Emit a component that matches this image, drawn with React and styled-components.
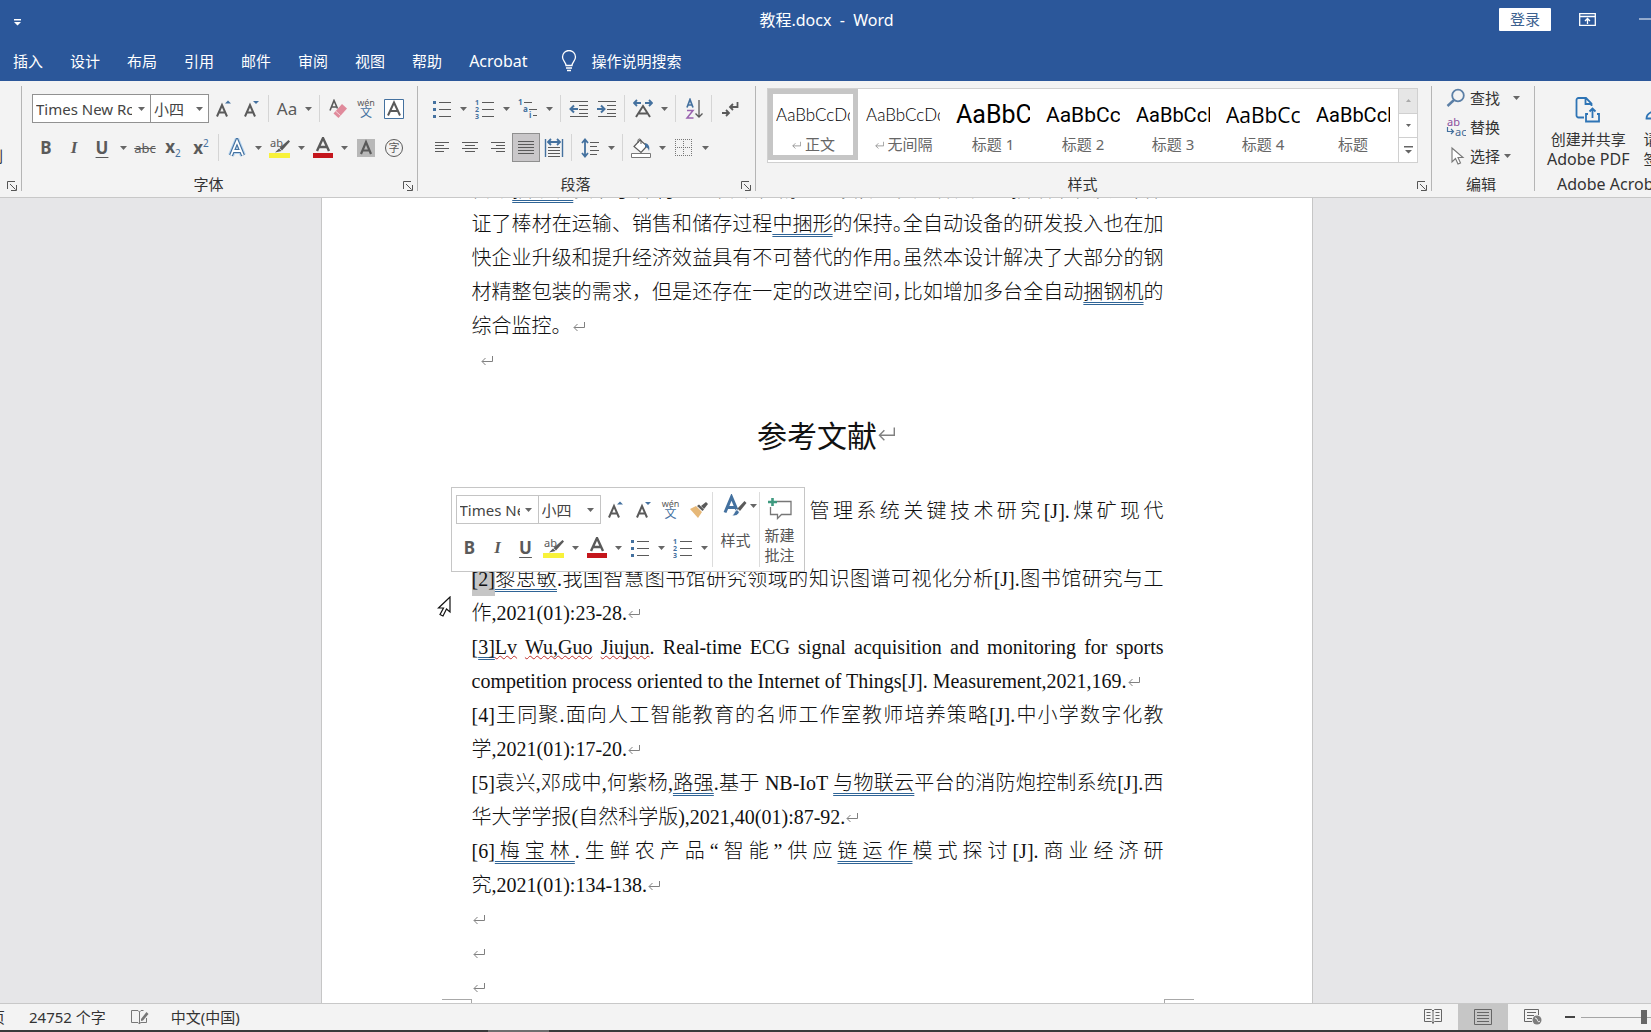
import React from "react";
import styled, { createGlobalStyle, css } from "styled-components";

const BLUE = "#2b579a";
const INK = "#5a5a5a";
const ACCENT = "#44719f";

/* ---------- icons ---------- */

const Caret = ({ color = "#666" }) => (
  <svg width="7" height="4" viewBox="0 0 7 4" aria-hidden="true">
    <path d="M0 0h7L3.5 4z" fill={color} />
  </svg>
);

const Launcher = () => (
  <svg width="10" height="10" viewBox="0 0 10 10" fill="none" stroke="#555" aria-hidden="true">
    <path d="M.5 8V.5H8M3 3l5.5 5.5M9.5 4v5.5H4" />
  </svg>
);

const Mark = styled.svg`
  margin-left: 1px;
`;

const ReturnMark = ({ size = 12 }) => (
  <Mark width={size} height={size} viewBox="0 0 12 12" fill="none" stroke="#808080" aria-hidden="true">
    <path d="M11.5 1v5.5H1.2M4.5 3 1 6.5 4.5 10" />
  </Mark>
);

const GrowIcon = ({ down }) => (
  <svg width="16" height="20" viewBox="0 0 16 20" aria-hidden="true">
    <path d="M2 17.500 7 6l5 11.500M4 13.500h6" fill="none" stroke={INK} strokeWidth="2" />
    <path d={down ? "M10 2h6l-3 3z" : "M10 4.500h6L13 1.500z"} fill={ACCENT} />
  </svg>
);

const EraserIcon = () => (
  <svg width="20" height="20" viewBox="0 0 20 20" aria-hidden="true">
    <path d="M2 11.500 6 1.500l3.500 8M3.500 8h5" fill="none" stroke={INK} strokeWidth="1.600" />
    <path d="M5.500 14.500 14 5l5 4.500-8.500 9.500z" fill="#e08a9b" />
    <path d="m7.500 12 5 4.500" stroke="#f6d5db" />
  </svg>
);

const Pinyin = () => (
  <PinyinBox>
    <span>wén</span>
    <b>文</b>
  </PinyinBox>
);

const OutlineA = () => (
  <svg width="20" height="20" viewBox="0 0 20 20" fill="none" aria-hidden="true">
    <path d="M4 17.500 10 3l6 14.500M6 13h8" stroke="#b5d3ee" strokeWidth="6" />
    <path d="M4 17.500 10 3l6 14.500M6 13h8" stroke={ACCENT} strokeWidth="4" />
    <path d="M4 17.500 10 3l6 14.500M6 13h8" stroke="#fff" strokeWidth="1.800" />
  </svg>
);

const HighlightIcon = () => (
  <svg width="22" height="22" viewBox="0 0 22 22" aria-hidden="true">
    <text x="1" y="10" fontFamily="Noto Sans" fontSize="11" fill={INK}>ab</text>
    <path d="m19.500 3 1.500 1.500-8 9-2.500-2.500z" fill={INK} />
    <path d="M10 11.500 12.500 14 6 15.500z" fill={INK} />
    <path d="M0 16h21v5H0z" fill="#f8f23a" />
  </svg>
);

const FontColorIcon = () => (
  <svg width="22" height="22" viewBox="0 0 22 22" aria-hidden="true">
    <path d="M5 14 11 1l6 13M7 10h8" fill="none" stroke={INK} strokeWidth="2.400" />
    <path d="M1 16h20v5H1z" fill="#c4161c" />
  </svg>
);

const ShadedA = () => (
  <svg width="18" height="18" viewBox="0 0 18 18" aria-hidden="true">
    <path d="M0 0h18v18H0z" fill="#b8b8b8" />
    <path d="M4 15 9 3l5 12M5.500 11.500h7" fill="none" stroke={INK} strokeWidth="2.200" />
  </svg>
);

const BoxedA = () => (
  <svg width="20" height="20" viewBox="0 0 20 20" fill="none" aria-hidden="true">
    <path d="M.5.5h19v19H.5z" stroke={ACCENT} fill="#fff" />
    <path d="m4 16.500 6-13 6 13M6 12h8" stroke={INK} strokeWidth="2" />
  </svg>
);

const CircledChar = () => (
  <svg width="20" height="20" viewBox="0 0 20 20" aria-hidden="true">
    <circle cx="10" cy="10" r="8.500" fill="none" stroke={INK} />
    <text x="10" y="14" textAnchor="middle" fontFamily="Noto Sans CJK SC" fontSize="11" fill={INK}>字</text>
  </svg>
);

const BulletsIcon = () => (
  <svg width="20" height="18" viewBox="0 0 20 18" aria-hidden="true">
    <path d="M7 2.500h12M7 9.500h12M7 16.500h12" stroke={INK} />
    <path d="M1 1h3v3H1zM1 8h3v3H1zM1 15h3v3H1z" fill={ACCENT} />
  </svg>
);

const NumberingIcon = () => (
  <svg width="20" height="20" viewBox="0 0 20 20" aria-hidden="true">
    <path d="M7 3.500h12M7 10.500h12M7 17.500h12" stroke={INK} />
    <g fontFamily="Noto Sans" fontSize="7" fontWeight="700" fill={ACCENT}>
      <text x="0" y="6">1</text>
      <text x="0" y="13">2</text>
      <text x="0" y="20">3</text>
    </g>
  </svg>
);

const MultiLevelIcon = () => (
  <svg width="20" height="20" viewBox="0 0 20 20" aria-hidden="true">
    <path d="M6 3.500h8M11 10.500h8M15 16.500h4" stroke={INK} />
    <g fontFamily="Noto Sans" fontSize="8" fontWeight="700" fill={ACCENT}>
      <text x="0" y="6">1</text>
      <text x="5" y="13">a</text>
      <text x="11" y="19">i</text>
    </g>
  </svg>
);

const IndentIcon = ({ more }) => (
  <svg width="20" height="18" viewBox="0 0 20 18" fill="none" aria-hidden="true">
    <path d="M1 1.500h18M10 5.500h9M10 9.500h9M10 13.500h9M1 16.500h18" stroke={INK} />
    <path d={more ? "M0 9h7M4 5.500 7.500 9 4 12.500" : "M9 9H2M5 5.500 1.500 9 5 12.500"} stroke={ACCENT} strokeWidth="2" />
  </svg>
);

const CharScaleIcon = () => (
  <svg width="20" height="20" viewBox="0 0 20 20" fill="none" aria-hidden="true">
    <path d="M3 18 10 7l7 11M6 14.500h8" stroke={INK} strokeWidth="2" />
    <path d="M1 4h7M4 1 1 4l3 3M12 4h7M16 1l3 3-3 3" stroke={ACCENT} strokeWidth="1.800" />
  </svg>
);

const SortIcon = () => (
  <svg width="18" height="22" viewBox="0 0 18 22" fill="none" aria-hidden="true">
    <path d="m2 9.500 3-8 3 8M3 7h4" stroke={ACCENT} strokeWidth="1.700" />
    <path d="M2 12.500h6L2 20h6.500" stroke="#9a63b0" strokeWidth="1.500" />
    <path d="M14 2v17M10.500 15.500 14 19l3.500-3.500" stroke={INK} strokeWidth="1.300" />
  </svg>
);

const ParaMarkIcon = () => (
  <svg width="18" height="18" viewBox="0 0 18 18" fill="none" stroke={INK} strokeWidth="1.800" aria-hidden="true">
    <path d="M16.500 2v5H9.500M12 4 9 7l3 3M1 13h7M5 10l3 3-3 3" />
  </svg>
);

const ALIGN = {
  left: "M2 2.500h14M2 5.500h9M2 8.500h14M2 11.500h9",
  center: "M1 2.500h16M4 5.500h10M1 8.500h16M4 11.500h10",
  right: "M2 2.500h14M7 5.500h9M2 8.500h14M7 11.500h9",
  justify: "M1 1.500h16M1 4.500h16M1 7.500h16M1 10.500h16M1 13.500h16",
};

const AlignIcon = ({ kind }) => (
  <svg width="18" height="15" viewBox="0 0 18 15" stroke={INK} aria-hidden="true">
    <path d={ALIGN[kind]} />
  </svg>
);

const DistributeIcon = () => (
  <svg width="20" height="20" viewBox="0 0 20 20" fill="none" aria-hidden="true">
    <path d="M1.500 1v18M18.500 1v18" stroke={ACCENT} strokeWidth="1.400" />
    <path d="M4 4h12M7 1 4 4l3 3M13 1l3 3-3 3" stroke={ACCENT} strokeWidth="1.800" />
    <path d="M4 9.500h12M4 12.500h12M4 15.500h12M4 18.500h12" stroke={INK} />
  </svg>
);

const LineSpacingIcon = () => (
  <svg width="18" height="20" viewBox="0 0 18 20" fill="none" aria-hidden="true">
    <path d="M4 2v16M1 5l3-3.500L7 5M1 15l3 3.500L7 15" stroke={ACCENT} strokeWidth="1.800" />
    <path d="M9 4.500h9M9 8.500h7M9 12.500h9M9 16.500h7" stroke={INK} />
  </svg>
);

const BucketIcon = () => (
  <svg width="20" height="20" viewBox="0 0 20 20" fill="none" aria-hidden="true">
    <path d="m9 2 7 6-6 6.500-7-6z" fill="#fff" stroke={INK} strokeWidth="1.200" />
    <path d="M7 5V2.500C7 .5 10 .5 10 2.500V6" stroke={INK} />
    <path d="M14 5c4 1 5 4 4 8-1-3-2-4-4-4z" fill={ACCENT} />
    <path d="M.5 15.500h19v4H.5z" fill="#fff" stroke="#777" />
  </svg>
);

const BordersIcon = () => (
  <svg width="18" height="18" viewBox="0 0 18 18" fill="none" stroke="#777" strokeDasharray="1 1" shapeRendering="crispEdges" aria-hidden="true">
    <path d="M0 .5h17M0 8.500h17M0 16.500h17M.5 0v17M8.500 0v17M16.500 0v17" />
  </svg>
);

const PainterIcon = () => (
  <svg width="18" height="16" viewBox="0 0 18 16" aria-hidden="true">
    <path d="M0 7 6 4l6 6-4 6z" fill="#e6b878" />
    <path d="m7 4 2-1.500 5 5L12.500 9z" fill={INK} />
    <path d="m11 4 5-4 2 2-4 5z" fill={INK} />
  </svg>
);

const StylesIcon = () => (
  <svg width="24" height="24" viewBox="0 0 24 24" aria-hidden="true">
    <path d="M2 18.500 8.500 3 14 16M4.500 13.500h8" fill="none" stroke={ACCENT} strokeWidth="3" />
    <path d="m21.500 7 2 2-6.500 8-2.500-2.500z" fill={INK} />
    <path d="M14 15.500 16.500 18c-1.500 4-5 4.500-8 3.500 3-.5 2.500-5 5.500-6z" fill={ACCENT} stroke="#fff" />
  </svg>
);

const CommentIcon = () => (
  <svg width="24" height="22" viewBox="0 0 24 22" fill="none" aria-hidden="true">
    <path d="M9 3.500h14v13H13.500l-4 4v-4H2.500V9" stroke="#777" strokeWidth="1.300" />
    <path d="M4.500 0v8M0 4h9" stroke="#3f9a80" strokeWidth="2.600" />
  </svg>
);

const BulbIcon = () => (
  <svg width="16" height="22" viewBox="0 0 16 22" fill="none" stroke="#fff" strokeWidth="1.300" aria-hidden="true">
    <path d="M5 15.500C5 12 1.500 11 1.500 7a6.500 6.500 0 0 1 13 0c0 4-3.500 5-3.500 8.500zM5 18h6M6 20.500h4" />
  </svg>
);

const RibbonOptionsIcon = () => (
  <svg width="17" height="13" viewBox="0 0 17 13" fill="none" stroke="#fff" strokeWidth="1.300" aria-hidden="true">
    <path d="M.7.7h15.600v11.600H.7zM.7 3.500h15.600M8.500 11V5.500M6 8l2.500-2.500L11 8" />
  </svg>
);

const SearchIcon = () => (
  <svg width="20" height="20" viewBox="0 0 20 20" fill="none" stroke="#5b7fa6" aria-hidden="true">
    <circle cx="12" cy="7.500" r="5.800" strokeWidth="1.800" />
    <path d="m8 12-6.500 6" strokeWidth="2.400" />
  </svg>
);

const ReplaceIcon = () => (
  <svg width="20" height="20" viewBox="0 0 20 20" aria-hidden="true">
    <g fontFamily="Noto Sans" fontSize="11">
      <text x="1" y="9" fill="#8a4f9e">ab</text>
      <text x="9" y="19" fill="#456a94">ac</text>
    </g>
    <path d="M1.500 10v4.500H7M5 12l2.500 2.500L5 17" fill="none" stroke={ACCENT} strokeWidth="1.200" />
  </svg>
);

const PointerIcon = () => (
  <svg width="20" height="20" viewBox="0 0 20 20" aria-hidden="true">
    <path d="M6 2v14l3.500-3.500L12 18l2.500-1-2.500-5.500h5z" fill="#fff" stroke="#777" strokeWidth="1.100" />
  </svg>
);

const PdfIcon = () => (
  <svg width="26" height="26" viewBox="0 0 26 26" fill="none" stroke="#2e74b5" strokeWidth="1.800" aria-hidden="true">
    <path d="M9 20.500H3.500a2 2 0 0 1-2-2V3a2 2 0 0 1 2-2H11l5.500 5.500V9M10.500 1.500V7h5.500" />
    <path d="M13 17h-2v7.500h13V17h-2M17.500 21v-9M14.500 14.500l3-3 3 3" />
  </svg>
);

const PersonIcon = () => (
  <svg width="26" height="26" viewBox="0 0 26 26" fill="none" stroke="#2e74b5" strokeWidth="1.800" aria-hidden="true">
    <circle cx="13" cy="7.500" r="6" />
    <path d="M9.500 12.500c0 3-8 2-8 9H13M15 22l2-5 6-6 2 2-6 6z" />
  </svg>
);

const ProofIcon = () => (
  <svg width="18" height="15" viewBox="0 0 18 15" fill="none" stroke="#777" aria-hidden="true">
    <path d="M8.500 2v12M8.500 2 7 .5H.5v12H7L8.500 14l1-1.500h6V8M8.500 2 10 .5h2.500" />
    <path d="m15.500 2-5.500 7v2l2-.5L17.500 4z" fill="#777" stroke="none" />
  </svg>
);

const ReadIcon = () => (
  <svg width="18" height="16" viewBox="0 0 18 16" fill="none" stroke="#666" aria-hidden="true">
    <path d="M9 2v13M9 2 7.500.5H.5v12h7L9 14l1.500-1.500h7V.5h-7z" />
    <path d="M2.500 3.500h4M2.500 6.500h4M2.500 9.500h4M11.500 3.500h4M11.500 6.500h4M11.500 9.500h4" />
  </svg>
);

const PrintIcon = () => (
  <svg width="18" height="16" viewBox="0 0 18 16" fill="none" stroke="#666" aria-hidden="true">
    <path d="M.5.5h17v15H.5zM3 3.500h12M3 6.500h12M3 9.500h12M3 12.500h12" />
  </svg>
);

const WebIcon = () => (
  <svg width="18" height="16" viewBox="0 0 18 16" fill="none" stroke="#666" aria-hidden="true">
    <path d="M8 12.500H.5v-12h14V6M3 3.500h9M3 6.500h7M3 9.500h5" />
    <circle cx="13" cy="11" r="4.500" fill="#7d7d7d" stroke="none" />
    <path d="M11 9c1.500 0 2 1 2.500 2.500S15 13 16 12" stroke="#fff" />
  </svg>
);

/* ---------- document text ---------- */

const Half = styled.span`
  font-family: "Noto Sans CJK SC", sans-serif;
  font-feature-settings: "halt";
  line-height: 1;
`;
const Proof = styled.span`
  text-decoration: underline double 1px #2f6496;
  text-decoration-skip-ink: none;
  text-underline-offset: 3px;
`;
const Spelling = styled.span`
  text-decoration: underline wavy 1px #c0302b;
  text-decoration-skip-ink: none;
`;
const Selected = styled.span`
  display: inline-block;
  height: 34px;
  line-height: 34px;
  background: #c6c6c6;
`;

const PARAGRAPH = [
  <>自动<Proof>捆钢机</Proof>实现了棒材的全自动化精整包装<Half>，</Half>能够有效提高打捆效率和质量<Half>，</Half>保</>,
  <>证了棒材在运输、销售和储存过程<Proof>中捆形</Proof>的保持<Half>。</Half>全自动设备的研发投入也在加</>,
  <>快企业升级和提升经济效益具有不可替代的作用<Half>。</Half>虽然本设计解决了大部分的钢</>,
  <>材精整包装的需求，但是还存在一定的改进空间<Half>，</Half>比如增加多台全自动<Proof>捆钢机</Proof>的</>,
];

const REFERENCES = [
  {
    first: <><Selected>[2]</Selected><Proof>黎思敏</Proof>.我国智慧图书馆研究领域的知识图谱可视化分析[J].图书馆研究与工</>,
    last: "作,2021(01):23-28.",
  },
  {
    first: <>[<Proof>3]</Proof><Spelling>Lv</Spelling> <Spelling>Wu,Guo</Spelling> <Spelling>Jiujun</Spelling>. Real-time ECG signal acquisition and monitoring for sports</>,
    last: "competition process oriented to the Internet of Things[J]. Measurement,2021,169.",
  },
  {
    first: <>[4]王同聚.面向人工智能教育的名师工作室教师培养策略[J].中小学数字化教</>,
    last: "学,2021(01):17-20.",
  },
  {
    first: <>[5]袁兴,邓成中,何紫杨,<Proof>路强</Proof>.基于 NB-IoT <Proof>与物联云</Proof>平台的消防炮控制系统[J].西</>,
    last: "华大学学报(自然科学版),2021,40(01):87-92.",
  },
  {
    first: <>[6]<Proof>梅宝林</Proof>.生鲜农产品“智能”供应<Proof>链运作</Proof>模式探讨[J].商业经济研</>,
    last: "究,2021(01):134-138.",
  },
];

const TABS = ["插入", "设计", "布局", "引用", "邮件", "审阅", "视图", "帮助", "Acrobat"];

const STYLES = [
  { name: "正文", sample: "AaBbCcDd", size: 17, font: "Lato", mark: true, active: true },
  { name: "无间隔", sample: "AaBbCcDd", size: 17, font: "Lato", mark: true },
  { name: "标题 1", sample: "AaBbC", size: 25, font: "Roboto" },
  { name: "标题 2", sample: "AaBbCc", size: 21, font: "Roboto" },
  { name: "标题 3", sample: "AaBbCcD", size: 20, font: "Roboto" },
  { name: "标题 4", sample: "AaBbCcD", size: 21, font: "Open Sans" },
  { name: "标题", sample: "AaBbCcD", size: 20, font: "Roboto" },
];

const Split = ({ label, children }) => (
  <>
    <Tool aria-label={label}>{children}</Tool>
    <DropArrow aria-label={`${label} ▾`}><Caret /></DropArrow>
  </>
);

const FontCombos = ({ mini }) => (
  <ComboRow>
    <Combo $width={mini ? 83 : 119} $mini={mini}>
      <input aria-label="字体" defaultValue="Times New Roman" />
      <button aria-label="字体 ▾"><Caret /></button>
    </Combo>
    <Combo $width={mini ? 63 : 59} $mini={mini}>
      <input aria-label="字号" defaultValue="小四" />
      <button aria-label="字号 ▾"><Caret /></button>
    </Combo>
  </ComboRow>
);

const RibbonGroup = ({ title, launcher, width, children }) => (
  <Group $width={width}>
    <GroupBody>{children}</GroupBody>
    <GroupFooter>
      <GroupTitle $shift={launcher}>{title}</GroupTitle>
      {launcher && <LaunchButton aria-label={`${title} …`}><Launcher /></LaunchButton>}
    </GroupFooter>
  </Group>
);

const MiniToolbar = () => (
  <Mini>
    <MiniMain>
      <Row>
        <FontCombos mini />
        <MiniGap />
        <Tool aria-label="A+"><GrowIcon /></Tool>
        <Tool aria-label="A-"><GrowIcon down /></Tool>
        <Tool aria-label="wén"><Pinyin /></Tool>
        <Tool aria-label="格式刷"><PainterIcon /></Tool>
      </Row>
      <Row>
        <Tool><Letter $bold>B</Letter></Tool>
        <Tool><Letter $bold $italic>I</Letter></Tool>
        <Tool><Letter $bold $underline>U</Letter></Tool>
        <Split label="ab"><HighlightIcon /></Split>
        <Split label="A"><FontColorIcon /></Split>
        <Split label="•"><BulletsIcon /></Split>
        <Split label="1."><NumberingIcon /></Split>
      </Row>
    </MiniMain>
    <MiniStyles>
      <MiniIconRow><StylesIcon /><Caret /></MiniIconRow>
      <span>样式</span>
    </MiniStyles>
    <MiniComment>
      <CommentIcon />
      <span>新建<br />批注</span>
    </MiniComment>
  </Mini>
);

const App = () => {
  return (
    <>
      <GlobalStyle />
      <Window>
        <TitleBar>
          <QuickAccess aria-label="快速访问">
            <svg width="7" height="7" viewBox="0 0 7 7"><path d="M0 0h7v1.500H0zM0 3h7L3.500 6.500z" fill="#fff" /></svg>
          </QuickAccess>
          <FileName>教程.docx&nbsp; -&nbsp; Word</FileName>
          <WindowButtons>
            <LoginButton>登录</LoginButton>
            <PlainButton aria-label="▴"><RibbonOptionsIcon /></PlainButton>
            <PlainButton aria-label="—">
              <svg width="16" height="2"><path d="M0 1h16" stroke="#fff" /></svg>
            </PlainButton>
          </WindowButtons>
        </TitleBar>
        <TabBar>
          {TABS.map((tab) => (
            <Tab key={tab}>{tab}</Tab>
          ))}
          <TellMe><BulbIcon />操作说明搜索</TellMe>
        </TabBar>

        <Ribbon>
          <Group $width={22}>
            <GroupBody><CutLabel>刷</CutLabel></GroupBody>
            <GroupFooter><LaunchButton aria-label="…"><Launcher /></LaunchButton></GroupFooter>
          </Group>

          <RibbonGroup title="字体" launcher width={396}>
            <ToolRows>
              <Row>
                <FontCombos />
                <Tool aria-label="A+"><GrowIcon /></Tool>
                <Tool aria-label="A-"><GrowIcon down /></Tool>
                <Sep />
                <Split label="Aa"><Letter>Aa</Letter></Split>
                <Sep />
                <Tool aria-label="A"><EraserIcon /></Tool>
                <Tool aria-label="wén"><Pinyin /></Tool>
                <Tool aria-label="A"><BoxedA /></Tool>
              </Row>
              <Row>
                <Tool><Letter $bold>B</Letter></Tool>
                <Tool><Letter $bold $italic>I</Letter></Tool>
                <Split label="U"><Letter $bold $underline>U</Letter></Split>
                <Tool><Letter $strike>abc</Letter></Tool>
                <Tool><Letter $bold>x<sub>2</sub></Letter></Tool>
                <Tool><Letter $bold>x<sup>2</sup></Letter></Tool>
                <Sep />
                <Split label="A"><OutlineA /></Split>
                <Split label="ab"><HighlightIcon /></Split>
                <Split label="A"><FontColorIcon /></Split>
                <Tool aria-label="A"><ShadedA /></Tool>
                <Tool aria-label="字"><CircledChar /></Tool>
              </Row>
            </ToolRows>
          </RibbonGroup>

          <RibbonGroup title="段落" launcher width={338}>
            <ToolRows>
              <Row>
                <Split label="•"><BulletsIcon /></Split>
                <Split label="1."><NumberingIcon /></Split>
                <Split label="a."><MultiLevelIcon /></Split>
                <Sep />
                <Tool aria-label="←"><IndentIcon /></Tool>
                <Tool aria-label="→"><IndentIcon more /></Tool>
                <Sep />
                <Split label="A"><CharScaleIcon /></Split>
                <Sep />
                <Tool aria-label="AZ"><SortIcon /></Tool>
                <Sep />
                <Tool aria-label="↵"><ParaMarkIcon /></Tool>
              </Row>
              <Row>
                <Tool aria-label="左"><AlignIcon kind="left" /></Tool>
                <Tool aria-label="中"><AlignIcon kind="center" /></Tool>
                <Tool aria-label="右"><AlignIcon kind="right" /></Tool>
                <Tool aria-label="两端" $pressed><AlignIcon kind="justify" /></Tool>
                <Tool aria-label="分散"><DistributeIcon /></Tool>
                <Sep />
                <Split label="行距"><LineSpacingIcon /></Split>
                <Sep />
                <Split label="底纹"><BucketIcon /></Split>
                <Split label="边框"><BordersIcon /></Split>
              </Row>
            </ToolRows>
          </RibbonGroup>

          <RibbonGroup title="样式" launcher width={676}>
            <Gallery>
              {STYLES.map((s) => (
                <StyleCard key={s.name} $active={s.active}>
                  <Sample $size={s.size} $font={s.font}>{s.sample}</Sample>
                  <StyleName>{s.mark && <ReturnMark size={9} />} {s.name}</StyleName>
                </StyleCard>
              ))}
              <GalleryScroll>
                <button aria-label="▴" disabled>
                  <svg width="5" height="3"><path d="M0 3h5L2.500 0z" fill="#aaa" /></svg>
                </button>
                <button aria-label="▾">
                  <svg width="5" height="3"><path d="M0 0h5L2.500 3z" fill="#666" /></svg>
                </button>
                <button aria-label="▾▾">
                  <svg width="9" height="8"><path d="M0 0h9v1.500H0zM1 4h7L4.500 7.500z" fill="#666" /></svg>
                </button>
              </GalleryScroll>
            </Gallery>
          </RibbonGroup>

          <RibbonGroup title="编辑" width={103}>
            <EditList>
              <EditButton><SearchIcon />查找<Spacer /><Caret /></EditButton>
              <EditButton><ReplaceIcon />替换</EditButton>
              <EditButton><PointerIcon />选择<Caret /></EditButton>
            </EditList>
          </RibbonGroup>

          <AcrobatGroup>
            <AcrobatTools>
              <BigButton><PdfIcon /><span>创建并共享</span><Latin>Adobe PDF</Latin></BigButton>
              <BigButton><PersonIcon /><span>请求</span><span>签名</span></BigButton>
            </AcrobatTools>
            <AcrobatTitle>Adobe Acrobat</AcrobatTitle>
          </AcrobatGroup>
        </Ribbon>

        <Workspace>
          <Page>
            {PARAGRAPH.map((line, i) => (
              <Line key={i} $justify>{line}</Line>
            ))}
            <Line>综合监控。<ReturnMark /></Line>
            <Line $indent={8}><ReturnMark /></Line>
            <Heading>参考文献<ReturnMark size={17} /></Heading>
            <Line $justify $indent={338}>管理系统关键技术研究[J].煤矿现代</Line>
            <Line />
            {REFERENCES.map((ref) => (
              <React.Fragment key={ref.last}>
                <Line $justify>{ref.first}</Line>
                <Line>{ref.last}<ReturnMark /></Line>
              </React.Fragment>
            ))}
            <Line><ReturnMark /></Line>
            <Line><ReturnMark /></Line>
            <Line><ReturnMark /></Line>
            <Corners><i /><i /></Corners>
            <MiniToolbar />
            <MouseArrow width="14" height="22" viewBox="0 0 14 22" aria-hidden="true">
              <path d="M13 1v15l-3.500-3L6 20l-3-1.500L6.500 12H1.500z" fill="#fff" stroke="#111" strokeWidth="1.200" />
            </MouseArrow>
          </Page>
        </Workspace>

        <StatusBar>
          <CutLabel $status>页</CutLabel>
          <WordCount>24752 个字</WordCount>
          <ProofIcon />
          <Language>中文(中国)</Language>
          <Spacer />
          <ViewButton aria-label="阅读"><ReadIcon /></ViewButton>
          <ViewButton aria-label="页面" $active><PrintIcon /></ViewButton>
          <ViewButton aria-label="Web"><WebIcon /></ViewButton>
          <ZoomOut aria-label="−"><svg width="10" height="2"><path d="M0 1h10" stroke="#444" strokeWidth="2" /></svg></ZoomOut>
          <ZoomBox><input type="range" aria-label="%" defaultValue="50" /></ZoomBox>
        </StatusBar>
        <TaskEdge><i /></TaskEdge>
      </Window>
    </>
  );
};

const GlobalStyle = createGlobalStyle`
  * { box-sizing: border-box; }
  body {
    margin: 0;
    font-family: "Noto Sans", "Noto Sans CJK SC", sans-serif;
    font-size: 15px;
    color: #333;
  }
  button, input {
    font: inherit;
    color: inherit;
    padding: 0;
    border: 0;
    background: none;
  }
  svg { flex: none; }
`;

const Window = styled.div`
  display: flex;
  flex-direction: column;
  height: 100vh;
  overflow: hidden;
`;

const TitleBar = styled.header`
  display: grid;
  grid-template-columns: 1fr auto 1fr;
  align-items: center;
  height: 38px;
  flex: none;
  padding-left: 2px;
  background: ${BLUE};
  color: #fff;
`;
const QuickAccess = styled.button`
  display: flex;
  justify-self: start;
  padding: 6px 12px 0;
`;
const FileName = styled.span`
  font-size: 16px;
`;
const WindowButtons = styled.div`
  display: flex;
  justify-content: flex-end;
  align-items: center;
  gap: 12px;
  overflow: hidden;
`;
const LoginButton = styled.button`
  width: 52px;
  height: 23px;
  line-height: 23px;
  margin-right: 12px;
  background: #fff;
  color: #3c618f;
  border-radius: 1px;
`;
const PlainButton = styled.button`
  display: flex;
  justify-content: center;
  width: 25px;

  &:last-child {
    width: 43px;
    justify-content: flex-end;
    margin-right: -4px;
  }
`;

const TabBar = styled.nav`
  display: flex;
  align-items: center;
  gap: 27px;
  height: 43px;
  flex: none;
  padding: 2px 13px 0;
  background: ${BLUE};
  color: #fff;
`;
const Tab = styled.button`
  white-space: nowrap;
  line-height: 22px;

  &:nth-last-child(2) {
    font-size: 16px;
  }
`;
const TellMe = styled.button`
  display: flex;
  align-items: center;
  gap: 15px;
  margin-left: 6px;
  line-height: 22px;
`;

const Ribbon = styled.div`
  display: flex;
  flex: none;
  height: 117px;
  padding: 5px 0 6px;
  background: #f3f3f3;
  border-bottom: 1px solid #c8c8c8;
  overflow: hidden;
`;
const Group = styled.section`
  display: flex;
  flex-direction: column;
  flex: none;
  width: ${(p) => p.$width}px;
  border-right: 1px solid #b5b5b5;
`;
const GroupBody = styled.div`
  flex: 1;
`;
const GroupFooter = styled.div`
  display: flex;
  align-items: flex-end;
  height: 14px;
  padding-right: 4px;
`;
const GroupTitle = styled.span`
  flex: 1;
  padding-right: ${(p) => (p.$shift ? 8 : 0)}px;
  text-align: center;
  line-height: 14px;
`;
const LaunchButton = styled.button`
  display: flex;
  margin-left: auto;
`;
const CutLabel = styled.span`
  display: flex;
  justify-content: flex-end;
  width: ${(p) => (p.$status ? 5 : 3)}px;
  overflow: hidden;
  margin-top: ${(p) => (p.$status ? 0 : 59)}px;
`;

const ToolRows = styled.div`
  display: flex;
  flex-direction: column;
  gap: 10px;
  padding: 8px 0 0 10px;
`;
const Row = styled.div`
  display: flex;
  align-items: center;
  height: 29px;
`;
const Tool = styled.button`
  display: flex;
  align-items: center;
  justify-content: center;
  flex: none;
  width: 28px;
  height: 29px;
  ${(p) =>
    p.$pressed &&
    css`
      background: #c9c7c9;
      border: 1px solid #8f8f8f;
    `}
`;
const DropArrow = styled.button`
  display: flex;
  align-items: center;
  justify-content: center;
  width: 15px;
  height: 29px;
`;
const Sep = styled.span`
  width: 1px;
  height: 27px;
  margin: 0 4px 0 3px;
  background: #d5d5d5;
`;
const Letter = styled.span`
  color: ${INK};
  font-size: ${(p) => (p.$strike ? 13 : 17)}px;
  font-weight: ${(p) => (p.$bold ? 700 : 400)};
  font-style: ${(p) => (p.$italic ? "italic" : "normal")};
  font-family: ${(p) => (p.$italic ? '"Liberation Serif", serif' : "inherit")};
  line-height: 20px;
  white-space: nowrap;
  text-decoration: ${(p) => (p.$underline ? "underline" : p.$strike ? "line-through" : "none")};
  text-underline-offset: 3px;

  sub, sup {
    font-size: 10px;
    font-weight: 400;
    line-height: 1;
    color: ${ACCENT};
  }
`;
const PinyinBox = styled.span`
  display: flex;
  flex-direction: column;
  align-items: center;
  color: ${INK};

  span {
    font-size: 9px;
    line-height: 9px;
  }
  b {
    font-size: 12px;
    line-height: 12px;
    font-weight: 400;
    color: ${ACCENT};
  }
`;
const ComboRow = styled.div`
  display: flex;
  > * + * {
    margin-left: -1px;
  }
`;
const Combo = styled.div`
  display: flex;
  align-items: center;
  width: ${(p) => p.$width}px;
  height: 29px;
  background: #fff;
  border: 1px solid ${(p) => (p.$mini ? "#c4c4c4" : "#919191")};
  font-size: 15px;

  input {
    flex: 1;
    min-width: 0;
    height: 24px;
    padding-left: 3px;
    color: #444;
  }
  button {
    display: flex;
    justify-content: center;
    width: 18px;
  }
`;

const Gallery = styled.div`
  display: flex;
  height: 75px;
  margin: 2px 13px 0 11px;
  background: #fff;
  border: 1px solid #d0d0d0;
`;
const StyleCard = styled.button`
  display: flex;
  flex-direction: column;
  align-items: stretch;
  width: 90px;
  height: 71px;
  border: ${(p) => (p.$active ? "5px solid #c6c6c6" : "5px solid transparent")};
  padding: 0 3px;
`;
const Sample = styled.span`
  height: 41px;
  line-height: 42px;
  overflow: hidden;
  white-space: nowrap;
  text-align: left;
  color: #000;
  font-family: "${(p) => p.$font}", sans-serif;
  font-size: ${(p) => p.$size}px;
  font-weight: ${(p) => (p.$font === "Lato" ? 300 : 400)};
`;
const StyleName = styled.span`
  line-height: 18px;
  color: #666;
  white-space: nowrap;
`;
const GalleryScroll = styled.div`
  display: flex;
  flex-direction: column;
  flex: 1;
  border-left: 1px solid #d0d0d0;

  button {
    flex: 1;
    display: flex;
    align-items: center;
    justify-content: center;
  }
  button + button {
    border-top: 1px solid #d0d0d0;
  }
  button:disabled {
    background: #e6e6e6;
  }
`;

const EditList = styled.div`
  display: flex;
  flex-direction: column;
  gap: 5px;
  padding: 0 14px;
`;
const EditButton = styled.button`
  display: flex;
  align-items: center;
  gap: 4px;
  height: 24px;
  line-height: 20px;
`;
const Spacer = styled.span`
  flex: 1;
`;

const AcrobatGroup = styled.section`
  display: flex;
  flex-direction: column;
  flex: 1;
  min-width: 0;
  overflow: hidden;
`;
const AcrobatTools = styled.div`
  display: flex;
  flex: 1;
  padding-left: 12px;
  gap: 14px;
`;
const BigButton = styled.button`
  display: flex;
  flex-direction: column;
  align-items: center;
  flex: none;
  padding-top: 11px;
  line-height: 20px;
  white-space: nowrap;

  svg {
    margin-bottom: 6px;
  }
`;
const Latin = styled.span`
  font-size: 16px;
`;
const AcrobatTitle = styled.span`
  padding-left: 22px;
  font-size: 16px;
  line-height: 14px;
  white-space: nowrap;
`;

const Workspace = styled.main`
  display: flex;
  justify-content: center;
  flex: 1;
  min-height: 0;
  padding-right: 18px;
  background: #e6e6e8;
  overflow: hidden;
`;
const Page = styled.article`
  position: relative;
  width: 992px;
  flex: none;
  align-self: flex-start;
  margin-top: -25px;
  padding: 0 148px 0 150px;
  background: #fff;
  border: solid #c6c6c6;
  border-width: 0 1px;
  color: #111;
  font-family: "Liberation Serif", "Noto Sans CJK SC", serif;
  font-size: 20px;
  font-weight: 300;
`;
const Line = styled.p`
  height: 34px;
  margin: 0;
  padding-left: ${(p) => p.$indent || 0}px;
  line-height: 34px;
  white-space: nowrap;
  ${(p) => p.$justify && css`text-align: justify; text-align-last: justify;`}
`;
const Heading = styled.h1`
  display: flex;
  align-items: center;
  justify-content: center;
  height: 117px;
  margin: 0;
  padding: 0 0 3px 17px;
  font-family: "Noto Sans CJK SC", sans-serif;
  font-size: 30px;
  font-weight: 400;
`;
const Corners = styled.div`
  display: flex;
  justify-content: space-between;
  height: 40px;
  margin: -5px -30px 0;

  i {
    width: 30px;
    border-top: 1px solid #a8a8a8;
    border-right: 1px solid #a8a8a8;
  }
  i + i {
    border-right: 0;
    border-left: 1px solid #a8a8a8;
  }
`;

/* floats over the text next to the selection */
const Mini = styled.div`
  position: absolute;
  left: 129px;
  top: 314px;
  display: flex;
  width: 354px;
  height: 85px;
  padding: 0 4px;
  background: #fff;
  border: 1px solid #c6c6c6;
  font-family: "Noto Sans", "Noto Sans CJK SC", sans-serif;
  font-size: 15px;
  font-weight: 400;
  color: #555;
`;
const MiniMain = styled.div`
  display: flex;
  flex-direction: column;
  gap: 9px;
  padding-top: 7px;
  width: 256px;
`;
const MiniGap = styled.span`
  width: 2px;
`;
const MiniStyles = styled.button`
  display: flex;
  flex-direction: column;
  align-items: center;
  gap: 12px;
  width: 47px;
  margin: 4px 0;
  padding-top: 2px;
  border-left: 1px solid #dcdcdc;
  line-height: 20px;
`;
const MiniIconRow = styled.span`
  display: flex;
  align-items: center;
  gap: 3px;
  padding-left: 8px;
`;
const MiniComment = styled.button`
  display: flex;
  flex-direction: column;
  align-items: center;
  gap: 5px;
  flex: 1;
  margin: 4px 0;
  padding-top: 6px;
  border-left: 1px solid #dcdcdc;
  line-height: 20px;
`;
const MouseArrow = styled.svg`
  position: absolute;
  left: 115px;
  top: 423px;
`;

const StatusBar = styled.footer`
  display: flex;
  align-items: center;
  flex: none;
  height: 27px;
  line-height: 18px;
  background: #f3f3f3;
  border-top: 1px solid #c8c8c8;
`;
const WordCount = styled.span`
  margin: 0 25px 0 24px;
`;
const Language = styled.span`
  margin-left: 22px;
`;
const ViewButton = styled.button`
  display: flex;
  align-items: center;
  justify-content: center;
  width: 50px;
  height: 26px;
  background: ${(p) => (p.$active ? "#c6c6c6" : "none")};
`;
const ZoomOut = styled.button`
  display: flex;
  margin: 0 6px 0 7px;
`;
const ZoomBox = styled.div`
  width: 70px;
  overflow: hidden;

  input {
    display: block;
    appearance: none;
    width: 126px;
    height: 14px;
    margin: 0;
    background: linear-gradient(#a5a5a5, #a5a5a5) center / 100% 1px no-repeat;
  }
  input::-webkit-slider-thumb {
    appearance: none;
    width: 6px;
    height: 14px;
    background: #666;
  }
`;
const TaskEdge = styled.div`
  display: flex;
  flex: none;
  height: 2px;
  padding-left: 488px;
  background: #3a3a3a;

  i {
    width: 61px;
    background: #6e6e6e;
  }
`;

export default App;
